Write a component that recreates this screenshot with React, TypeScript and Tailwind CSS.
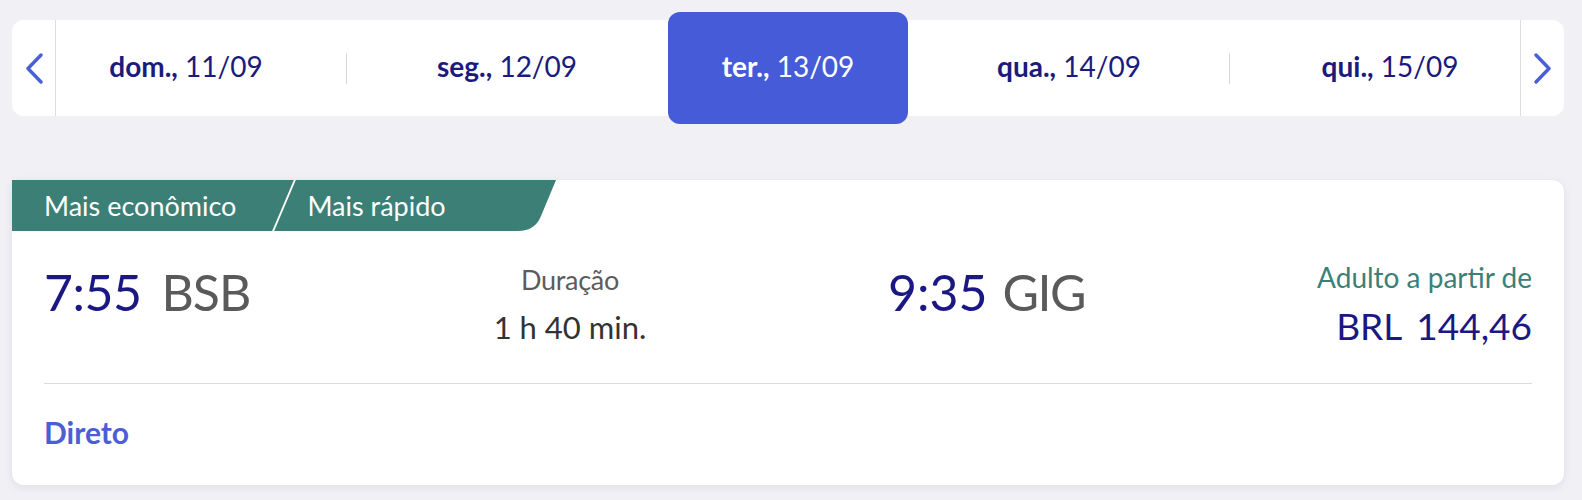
import React from 'react';

const font = { fontFamily: 'Lato, "Open Sans", sans-serif' };

function Chevron({ dir }: { dir: 'left' | 'right' }) {
  return (
    <svg width="18" height="31" viewBox="0 0 18 31" fill="none">
      <polyline
        points={dir === 'left' ? '16,2 3,15.5 16,29' : '2,2 15,15.5 2,29'}
        stroke="#4a5ed6"
        strokeWidth="3.4"
        strokeLinecap="round"
        strokeLinejoin="round"
      />
    </svg>
  );
}

const days = [
  { day: 'dom.,', date: '11/09', w: 'w-[320px]' },
  { day: 'seg.,', date: '12/09', w: 'w-[320px]' },
  { day: 'ter.,', date: '13/09', w: 'w-[242px]', active: true },
  { day: 'qua.,', date: '14/09', w: 'w-[320px]' },
  { day: 'qui.,', date: '15/09', w: 'w-[320px]' },
];

function DateStrip() {
  return (
    <div className="flex h-[96px] rounded-[12px] bg-white">
      <button className="flex w-[44px] shrink-0 items-center justify-center border-r border-[#dcdcdc]">
        <Chevron dir="left" />
      </button>
      <div className="flex min-w-0 flex-1 justify-center overflow-x-clip">
        {days.map((d, i) => (
          <React.Fragment key={d.date}>
            {d.active ? (
              <div className={`${d.w} -my-[8px] flex shrink-0 items-center justify-center px-[1px]`}>
                <div className="flex h-full w-full items-center justify-center rounded-[12px] bg-[#465bd8] pb-[4px] text-[28px] leading-none text-white">
                  <span className="font-bold">{d.day}</span>&nbsp;{d.date}
                </div>
              </div>
            ) : (
              <div className={`${d.w} flex shrink-0 items-center justify-center pb-[4px] text-[28px] leading-none text-[#1b1b7d]`}>
                <span className="font-bold">{d.day}</span>&nbsp;{d.date}
              </div>
            )}
            {(i === 0 || i === 3) && <div className="h-[31px] w-px shrink-0 self-center bg-[#d8d8d8]" />}
          </React.Fragment>
        ))}
      </div>
      <button className="flex w-[44px] shrink-0 items-center justify-center border-l border-[#dcdcdc]">
        <Chevron dir="right" />
      </button>
    </div>
  );
}

function Tag() {
  return (
    <div className="flex h-[51px]">
      <div className="flex w-[498px] items-center bg-[#3b7f76] text-[27px] leading-none text-white">
        <span className="ml-[32px]">Mais econômico</span>
        <div className="ml-[47px] h-full w-[2px] skew-x-[-23deg] bg-white" />
        <span className="ml-[22px]">Mais rápido</span>
      </div>
      <svg width="46" height="51" viewBox="0 0 46 51" className="shrink-0">
        <path d="M0 0 H46 L31 36 Q25 51 8 51 H0 Z" fill="#3b7f76" />
      </svg>
    </div>
  );
}

function FlightCard() {
  return (
    <div className="mt-[64px] rounded-[12px] rounded-tl-none bg-white shadow-[0_2px_10px_rgba(20,20,60,0.08)]">
      <Tag />
      <div className="px-[32px]">
        <div className="flex items-start pt-[32px]">
          <div className="w-[376px] pt-[4px] text-[50px] leading-none">
            <span className="tracking-[-0.5px] text-[#1c1883]">7:55</span>
            <span className="ml-[20px] tracking-[-1px] text-[#5a5a5a]">BSB</span>
          </div>
          <div className="w-[300px] pt-[3px] text-center leading-none">
            <div className="text-[27px] tracking-[-0.3px] text-[#5c5c5c]">Duração</div>
            <div className="mt-[19px] text-[31px] text-[#333333]">1 h 40 min.</div>
          </div>
          <div className="ml-[168px] pt-[4px] text-[50px] leading-none">
            <span className="text-[#1c1883]">9:35</span>
            <span className="ml-[15px] tracking-[-1.5px] text-[#5a5a5a]">GIG</span>
          </div>
          <div className="ml-auto text-right leading-none">
            <div className="text-[28px] text-[#3b8077]">Adulto a partir de</div>
            <div className="mt-[16px] text-[37px] text-[#1c1883]">
              BRL<span className="ml-[14px]">144,46</span>
            </div>
          </div>
        </div>
        <div className="mt-[39px] h-px bg-[#dcdcdc]" />
        <div className="mt-[33px] pb-[38px] text-[30px] font-bold leading-none text-[#4a5ed6]">Direto</div>
      </div>
    </div>
  );
}

export default function App() {
  return (
    <div className="min-h-[500px] bg-[#f0f0f5] pl-[12px] pr-[18px] pt-[20px]" style={font}>
      <DateStrip />
      <FlightCard />
    </div>
  );
}
